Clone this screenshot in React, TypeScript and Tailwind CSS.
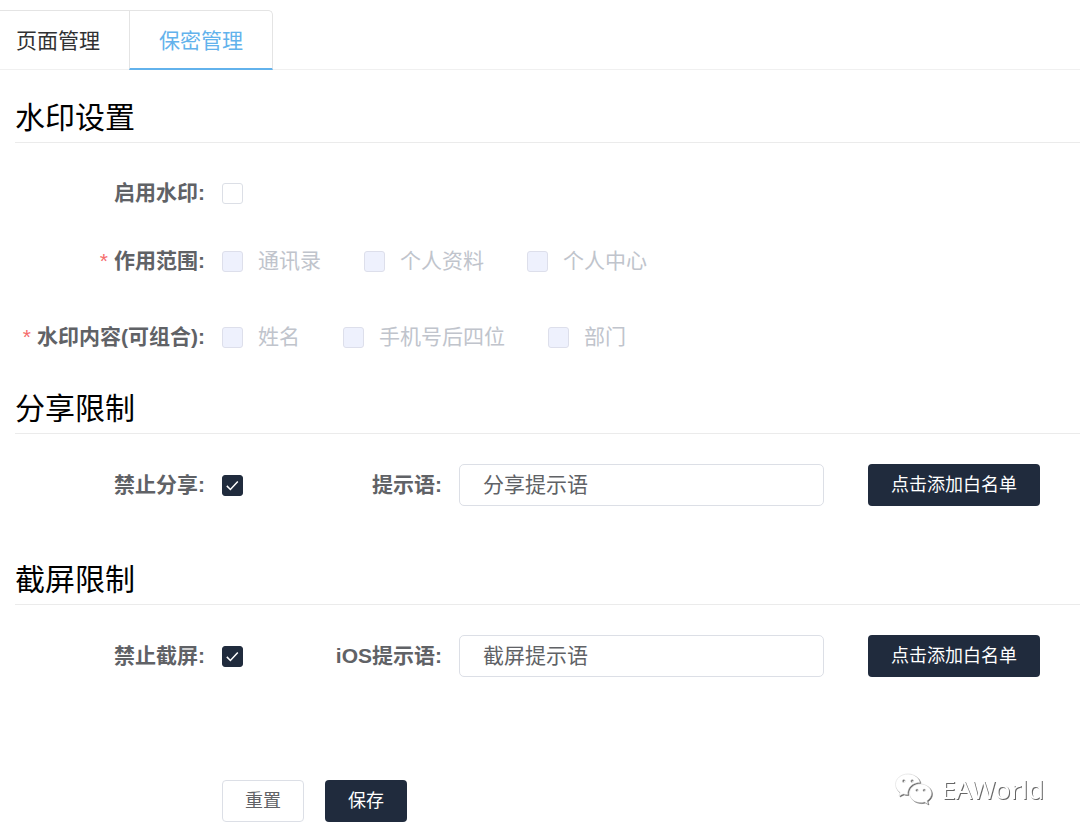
import { useState } from "react";
import type { ReactNode } from "react";

const SCOPES = ["通讯录", "个人资料", "个人中心"];
const CONTENTS = ["姓名", "手机号后四位", "部门"];

interface CheckboxProps {
  id?: string;
  checked: boolean;
  disabled?: boolean;
  onChange?: (checked: boolean) => void;
}

function Checkbox({ id, checked, disabled, onChange }: CheckboxProps) {
  return (
    <span className="relative inline-flex h-[21px] w-[21px] shrink-0">
      <input
        type="checkbox"
        id={id}
        checked={checked}
        disabled={disabled}
        onChange={(e) => onChange?.(e.target.checked)}
        className="h-full w-full appearance-none rounded-[3px] border border-[#dcdfe6] bg-white checked:border-[#202b3d] checked:bg-[#202b3d] disabled:border-[#dddfeb] disabled:bg-[#eef1fd]"
      />
      {checked && (
        <svg
          className="pointer-events-none absolute inset-0 h-full w-full"
          viewBox="0 0 21 21"
          fill="none"
          stroke="white"
          strokeWidth={1.5}
        >
          <path d="M4.8 10.9l3.6 3.6 7.4-8" />
        </svg>
      )}
    </span>
  );
}

function SectionTitle({ children }: { children: ReactNode }) {
  return (
    <h2 className="ml-[15px] border-b border-[#ebebeb] pb-2 text-[30px] leading-8 text-black">
      {children}
    </h2>
  );
}

interface CheckGroupProps {
  name: string;
  label: string;
  options: string[];
}

function CheckGroup({ name, label, options }: CheckGroupProps) {
  return (
    <div
      role="group"
      aria-labelledby={name}
      className="flex h-[42px] items-center"
    >
      <div
        id={name}
        className="w-[222px] shrink-0 pr-[17px] text-right whitespace-nowrap"
      >
        <span className="mr-[6px] text-[#f56c6c]">*</span>
        <span className="font-semibold">{label}</span>
      </div>
      <div className="flex gap-[43px]">
        {options.map((option) => (
          <label
            key={option}
            className="flex items-center gap-[15px] whitespace-nowrap text-[#c0c4cc]"
          >
            <Checkbox checked={false} disabled />
            {option}
          </label>
        ))}
      </div>
    </div>
  );
}

interface LimitRowProps {
  name: string;
  label: string;
  tipLabel: string;
  defaultTip: string;
}

function LimitRow({ name, label, tipLabel, defaultTip }: LimitRowProps) {
  const [enabled, setEnabled] = useState(true);
  const [tip, setTip] = useState(defaultTip);

  return (
    <div className="flex h-[42px] items-center pr-10">
      <label
        htmlFor={name}
        className="w-[222px] shrink-0 pr-[17px] text-right font-semibold"
      >
        {label}
      </label>
      <Checkbox id={name} checked={enabled} onChange={setEnabled} />
      <label
        htmlFor={`${name}-tip`}
        className="w-[216px] shrink-0 pr-[17px] text-right font-semibold"
      >
        {tipLabel}
      </label>
      <input
        type="text"
        id={`${name}-tip`}
        value={tip}
        onChange={(e) => setTip(e.target.value)}
        className="h-full min-w-0 flex-1 rounded-[5px] border border-[#dcdfe6] bg-white px-[23px] pb-1 outline-none focus:border-[#202b3d]"
      />
      <button
        type="button"
        className="ml-11 h-full shrink-0 rounded-[4px] bg-[#202b3d] px-[23px] text-lg text-white"
      >
        点击添加白名单
      </button>
    </div>
  );
}

export default function App() {
  const [watermark, setWatermark] = useState(false);
  const [tab, setTab] = useState("secret");

  return (
    <div className="min-h-screen bg-white pt-[10px] pb-3 font-['Liberation_Sans','Noto_Sans_CJK_SC',sans-serif] text-[21px] leading-7 text-[#606266]">
      <nav className="flex h-[60px] border-b border-[#f0f0f0]">
        <button
          type="button"
          onClick={() => setTab("page")}
          className={`-mb-px border-t border-t-[#e4e4e4] pt-px pr-[29px] pl-4 ${
            tab === "page" ? "text-[#62b2ec]" : "text-[#303133]"
          }`}
        >
          页面管理
        </button>
        <button
          type="button"
          onClick={() => setTab("secret")}
          className={`-mb-px rounded-tr-[5px] border-x border-t border-b-2 border-x-[#e4e4e4] border-t-[#e4e4e4] px-[29px] pt-0.5 ${
            tab === "secret"
              ? "border-b-[#62b2ec] text-[#62b2ec]"
              : "border-b-transparent text-[#303133]"
          }`}
        >
          保密管理
        </button>
      </nav>

      <form onSubmit={(e) => e.preventDefault()} className="pt-8">
        <SectionTitle>水印设置</SectionTitle>
        <div className="mt-[29px] flex h-[42px] items-center">
          <label
            htmlFor="watermark"
            className="w-[222px] shrink-0 pr-[17px] text-right font-semibold"
          >
            启用水印:
          </label>
          <Checkbox
            id="watermark"
            checked={watermark}
            onChange={setWatermark}
          />
        </div>
        <div className="mt-[26px] mb-[34px]">
          <CheckGroup name="scope" label="作用范围:" options={SCOPES} />
        </div>
        <div className="mb-[35px]">
          <CheckGroup
            name="content"
            label="水印内容(可组合):"
            options={CONTENTS}
          />
        </div>

        <SectionTitle>分享限制</SectionTitle>
        <div className="mt-[30px] mb-[58px]">
          <LimitRow
            name="share"
            label="禁止分享:"
            tipLabel="提示语:"
            defaultTip="分享提示语"
          />
        </div>

        <SectionTitle>截屏限制</SectionTitle>
        <div className="mt-[30px]">
          <LimitRow
            name="capture"
            label="禁止截屏:"
            tipLabel="iOS提示语:"
            defaultTip="截屏提示语"
          />
        </div>

        <div className="mt-[103px] flex h-[42px] pr-9 pl-[222px]">
          <button
            type="reset"
            className="rounded-[4px] border border-[#dcdfe6] bg-white px-[22px] text-lg"
          >
            重置
          </button>
          <button
            type="submit"
            className="ml-[21px] rounded-[4px] bg-[#202b3d] px-[23px] text-lg text-white"
          >
            保存
          </button>
          <div className="-mt-6 ml-auto flex items-center gap-2 text-white drop-shadow-[1px_1px_0px_rgba(0,0,0,0.6)]">
            <svg
              className="h-8 w-[38px]"
              viewBox="0 0 38 32"
              fill="currentColor"
              stroke="#d4d4d4"
              strokeWidth={0.5}
            >
              <path
                fillRule="evenodd"
                d="M13 1C6 1 .5 5.600.5 11.500c0 3.300 1.800 6.200 4.600 8.100L4 23l4.200-2.100c1.500.5 3 .7 4.600.7C12 15 17.500 9.500 25 9.500 24 4.500 19 1 13 1zM8.800 6.600a1.500 1.500 0 110 3 1.500 1.500 0 010-3zm8.400 0a1.500 1.500 0 110 3 1.500 1.500 0 010-3z"
              />
              <path
                fillRule="evenodd"
                d="M25.500 11C19.400 11 14.500 15.200 14.500 20.300s4.900 9.300 11 9.300c1.400 0 2.700-.2 3.900-.6L33 31l-1-3.200c2.700-1.700 4.500-4.400 4.500-7.500 0-5.100-4.900-9.300-11-9.300zM22 16a1.300 1.300 0 110 2.600 1.300 1.300 0 010-2.600zm7.200 0a1.300 1.300 0 110 2.600 1.300 1.300 0 010-2.600z"
              />
            </svg>
            <span className="font-['Noto_Sans',sans-serif] text-[26px]">
              EAWorld
            </span>
          </div>
        </div>
      </form>
    </div>
  );
}
